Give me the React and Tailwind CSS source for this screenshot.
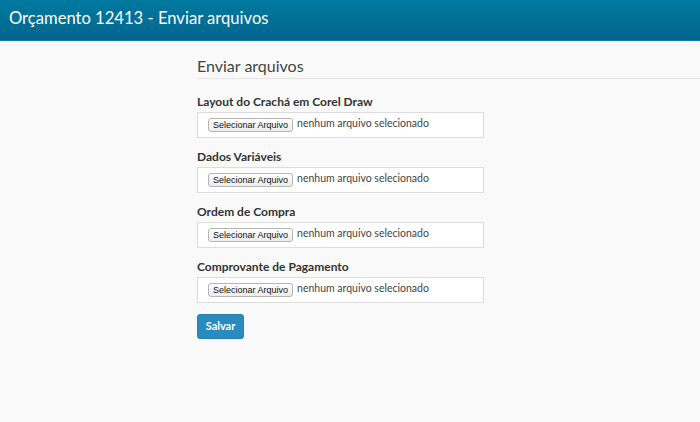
export default function App() {
  const fields = [
    "Layout do Crachá em Corel Draw",
    "Dados Variáveis",
    "Ordem de Compra",
    "Comprovante de Pagamento",
  ];
  return (
    <div className="w-[700px] h-[422px] bg-[#f9f9f9] overflow-hidden" style={{ fontFamily: "Lato, 'Open Sans', sans-serif" }}>
      <header className="h-[41px] bg-gradient-to-b from-[#017aa0] to-[#02648c] border-b border-[#0f7fa6] flex items-center pl-[9px] pb-[3px]">
        <h1 className="text-white text-[16.6px] leading-none">Orçamento 12413 - Enviar arquivos</h1>
      </header>
      <main className="pl-[197px] pt-[14px]">
        <h2 className="text-[16px] leading-[22px] text-[#444] pb-[1px] border-b border-[#e5e5e5]">Enviar arquivos</h2>
        <form className="pt-[16px] w-[287px] flex flex-col">
          {fields.map((f) => (
            <div key={f} className="flex flex-col mb-[12px]">
              <label className="text-[12px] font-bold text-[#333] leading-[14px] mb-[3px]">{f}</label>
              <div className="h-[26px] bg-white border border-[#dcdcdc] flex items-center pl-[10px]">
                <span className="h-[14px] px-[4px] border border-[#b5b5b5] rounded-[3px] bg-gradient-to-b from-white to-[#ececec] text-[9px] leading-[12px] text-[#111] flex items-center" style={{ fontFamily: "'Liberation Sans', Arial, sans-serif" }}>Selecionar Arquivo</span>
                <span className="ml-[4px] text-[10.5px] text-[#444] -mt-[2px]">nenhum arquivo selecionado</span>
              </div>
            </div>
          ))}
          <div className="-mt-[3px]">
            <button type="button" className="h-[25px] w-[47px] rounded-[3px] bg-[#2a8bbe] border border-[#2680b0] text-white text-[11px] font-bold">Salvar</button>
          </div>
        </form>
      </main>
    </div>
  );
}
